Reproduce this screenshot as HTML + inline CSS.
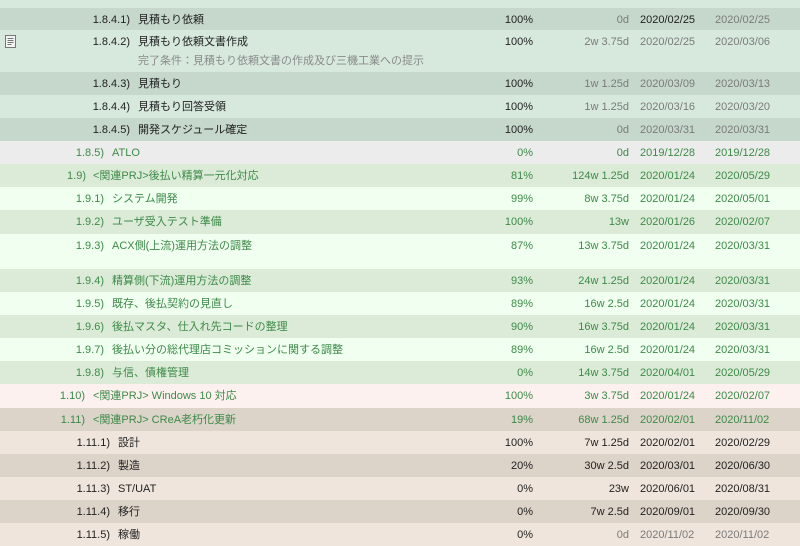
<!DOCTYPE html>
<html><head><meta charset="utf-8"><style>
*{margin:0;padding:0;box-sizing:border-box}
body{width:800px;height:546px;overflow:hidden;background:#d7e9dd;font-family:"Liberation Sans","Noto Sans CJK JP",sans-serif;font-size:11px;position:relative}
.r{position:absolute;left:0;width:800px}
.r span{position:absolute;top:5px;white-space:nowrap;line-height:14px}
.n{text-align:right}
.p{right:267px}
.d{right:171px}
.s{left:640px}
.e{left:715px}
.sub{top:24px!important;color:#8a8a8a}
.k{color:#222}.g{color:#3d8a48}.gr{color:#7a7a7a}
</style></head><body>
<div class="r" style="top:0;height:8px;background:#d7e9dd"></div>
<div class="r k" style="top:8px;height:22px;background:#c6d8cc">
<span class="n" style="right:670px">1.8.4.1)</span><span style="left:138px">見積もり依頼</span>
<span class="p">100%</span><span class="d gr">0d</span><span class="s" style="color:#222">2020/02/25</span><span class="e gr">2020/02/25</span></div>
<div class="r k" style="top:30px;height:42px;background:#d7e9dd">
<svg style="position:absolute;left:5px;top:5px" width="11" height="13" viewBox="0 0 11 13"><rect x="0.5" y="0.5" width="10" height="12" fill="#f4f4f4" stroke="#777"/><path d="M2.5 3.5h6M2.5 5.5h6M2.5 7.5h6M2.5 9.5h4" stroke="#777"/></svg>
<span class="n" style="right:670px">1.8.4.2)</span><span style="left:138px">見積もり依頼文書作成</span>
<span class="sub" style="left:138px">完了条件：見積もり依頼文書の作成及び三機工業への提示</span>
<span class="p">100%</span><span class="d gr">2w 3.75d</span><span class="s gr">2020/02/25</span><span class="e gr">2020/03/06</span></div>
<div class="r k" style="top:72px;height:23px;background:#c6d8cc">
<span class="n" style="right:670px">1.8.4.3)</span><span style="left:138px">見積もり</span>
<span class="p">100%</span><span class="d gr">1w 1.25d</span><span class="s gr">2020/03/09</span><span class="e gr">2020/03/13</span></div>
<div class="r k" style="top:95px;height:23px;background:#d7e9dd">
<span class="n" style="right:670px">1.8.4.4)</span><span style="left:138px">見積もり回答受領</span>
<span class="p">100%</span><span class="d gr">1w 1.25d</span><span class="s gr">2020/03/16</span><span class="e gr">2020/03/20</span></div>
<div class="r k" style="top:118px;height:23px;background:#c6d8cc">
<span class="n" style="right:670px">1.8.4.5)</span><span style="left:138px">開発スケジュール確定</span>
<span class="p">100%</span><span class="d gr">0d</span><span class="s gr">2020/03/31</span><span class="e gr">2020/03/31</span></div>
<div class="r g" style="top:141px;height:23px;background:#ececec">
<span class="n" style="right:696px">1.8.5)</span><span style="left:112px">ATLO</span>
<span class="p">0%</span><span class="d">0d</span><span class="s">2019/12/28</span><span class="e">2019/12/28</span></div>
<div class="r g" style="top:164px;height:23px;background:#dcebd8">
<span class="n" style="right:714px">1.9)</span><span style="left:93px">&lt;関連PRJ&gt;後払い精算一元化対応</span>
<span class="p">81%</span><span class="d">124w 1.25d</span><span class="s">2020/01/24</span><span class="e">2020/05/29</span></div>
<div class="r g" style="top:187px;height:23px;background:#f0fff0">
<span class="n" style="right:696px">1.9.1)</span><span style="left:112px">システム開発</span>
<span class="p">99%</span><span class="d">8w 3.75d</span><span class="s">2020/01/24</span><span class="e">2020/05/01</span></div>
<div class="r g" style="top:210px;height:24px;background:#dcebd8">
<span class="n" style="right:696px">1.9.2)</span><span style="left:112px">ユーザ受入テスト準備</span>
<span class="p">100%</span><span class="d">13w</span><span class="s">2020/01/26</span><span class="e">2020/02/07</span></div>
<div class="r g" style="top:234px;height:35px;background:#f0fff0">
<span class="n" style="right:696px">1.9.3)</span><span style="left:112px">ACX側(上流)運用方法の調整</span>
<span class="p">87%</span><span class="d">13w 3.75d</span><span class="s">2020/01/24</span><span class="e">2020/03/31</span></div>
<div class="r g" style="top:269px;height:23px;background:#dcebd8">
<span class="n" style="right:696px">1.9.4)</span><span style="left:112px">精算側(下流)運用方法の調整</span>
<span class="p">93%</span><span class="d">24w 1.25d</span><span class="s">2020/01/24</span><span class="e">2020/03/31</span></div>
<div class="r g" style="top:292px;height:23px;background:#f0fff0">
<span class="n" style="right:696px">1.9.5)</span><span style="left:112px">既存、後払契約の見直し</span>
<span class="p">89%</span><span class="d">16w 2.5d</span><span class="s">2020/01/24</span><span class="e">2020/03/31</span></div>
<div class="r g" style="top:315px;height:23px;background:#dcebd8">
<span class="n" style="right:696px">1.9.6)</span><span style="left:112px">後払マスタ、仕入れ先コードの整理</span>
<span class="p">90%</span><span class="d">16w 3.75d</span><span class="s">2020/01/24</span><span class="e">2020/03/31</span></div>
<div class="r g" style="top:338px;height:23px;background:#f0fff0">
<span class="n" style="right:696px">1.9.7)</span><span style="left:112px">後払い分の総代理店コミッションに関する調整</span>
<span class="p">89%</span><span class="d">16w 2.5d</span><span class="s">2020/01/24</span><span class="e">2020/03/31</span></div>
<div class="r g" style="top:361px;height:23px;background:#dcebd8">
<span class="n" style="right:696px">1.9.8)</span><span style="left:112px">与信、債権管理</span>
<span class="p">0%</span><span class="d">14w 3.75d</span><span class="s">2020/04/01</span><span class="e">2020/05/29</span></div>
<div class="r g" style="top:384px;height:24px;background:#fdf1ef">
<span class="n" style="right:715px">1.10)</span><span style="left:93px">&lt;関連PRJ&gt; Windows 10 対応</span>
<span class="p">100%</span><span class="d">3w 3.75d</span><span class="s">2020/01/24</span><span class="e">2020/02/07</span></div>
<div class="r g" style="top:408px;height:23px;background:#dcd3c9">
<span class="n" style="right:715px">1.11)</span><span style="left:93px">&lt;関連PRJ&gt; CReA老朽化更新</span>
<span class="p">19%</span><span class="d">68w 1.25d</span><span class="s">2020/02/01</span><span class="e">2020/11/02</span></div>
<div class="r k" style="top:431px;height:23px;background:#efe5dc">
<span class="n" style="right:690px">1.11.1)</span><span style="left:118px">設計</span>
<span class="p">100%</span><span class="d">7w 1.25d</span><span class="s">2020/02/01</span><span class="e">2020/02/29</span></div>
<div class="r k" style="top:454px;height:23px;background:#dcd3c9">
<span class="n" style="right:690px">1.11.2)</span><span style="left:118px">製造</span>
<span class="p">20%</span><span class="d">30w 2.5d</span><span class="s">2020/03/01</span><span class="e">2020/06/30</span></div>
<div class="r k" style="top:477px;height:23px;background:#efe5dc">
<span class="n" style="right:690px">1.11.3)</span><span style="left:118px">ST/UAT</span>
<span class="p">0%</span><span class="d">23w</span><span class="s">2020/06/01</span><span class="e">2020/08/31</span></div>
<div class="r k" style="top:500px;height:23px;background:#dcd3c9">
<span class="n" style="right:690px">1.11.4)</span><span style="left:118px">移行</span>
<span class="p">0%</span><span class="d">7w 2.5d</span><span class="s">2020/09/01</span><span class="e">2020/09/30</span></div>
<div class="r k" style="top:523px;height:23px;background:#efe5dc">
<span class="n" style="right:690px">1.11.5)</span><span style="left:118px">稼働</span>
<span class="p">0%</span><span class="d gr">0d</span><span class="s gr">2020/11/02</span><span class="e gr">2020/11/02</span></div>
</body></html>
